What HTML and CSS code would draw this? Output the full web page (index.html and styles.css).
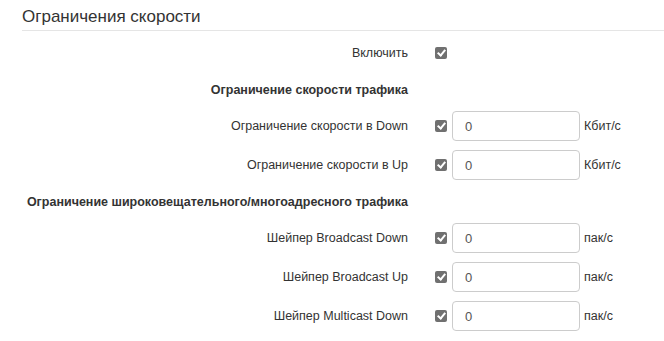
FILE: index.html
```html
<!DOCTYPE html>
<html>
  <head>
    <meta charset="utf-8">
    <link rel="stylesheet" href="styles.css">
    <title>Ограничения скорости</title>
  </head>
  <body>
    <div id="speed-limits">
      <h2 class="page-title">Ограничения скорости</h2>

      <div class="row row-first">
        <label for="enable" class="row-label">Включить</label>
        <input type="checkbox" id="enable" class="check" checked>
      </div>

      <div class="section">
        <div class="row-label section-label">Ограничение скорости трафика</div>
      </div>

      <div class="row row-after-section">
        <label for="rate-down" class="row-label">Ограничение скорости в Down</label>
        <input type="checkbox" class="check" checked>
        <input type="text" id="rate-down" class="value" value="0">
        <span class="unit">Кбит/с</span>
      </div>
      <div class="row">
        <label for="rate-up" class="row-label">Ограничение скорости в Up</label>
        <input type="checkbox" class="check" checked>
        <input type="text" id="rate-up" class="value" value="0">
        <span class="unit">Кбит/с</span>
      </div>

      <div class="section">
        <div class="row-label section-label">Ограничение широковещательного/многоадресного трафика</div>
      </div>

      <div class="row row-after-section">
        <label for="bc-down" class="row-label">Шейпер Broadcast Down</label>
        <input type="checkbox" class="check" checked>
        <input type="text" id="bc-down" class="value" value="0">
        <span class="unit">пак/с</span>
      </div>
      <div class="row">
        <label for="bc-up" class="row-label">Шейпер Broadcast Up</label>
        <input type="checkbox" class="check" checked>
        <input type="text" id="bc-up" class="value" value="0">
        <span class="unit">пак/с</span>
      </div>
      <div class="row">
        <label for="mc-down" class="row-label">Шейпер Multicast Down</label>
        <input type="checkbox" class="check" checked>
        <input type="text" id="mc-down" class="value" value="0">
        <span class="unit">пак/с</span>
      </div>
    </div>
  </body>
</html>
```

FILE: styles.css
```css
* {
  box-sizing: border-box;
}
body {
  margin: 0;
  font-family: "Liberation Sans", Arial, sans-serif;
  font-size: 12.5px;
  color: #333333;
  background-color: #fff;
}
#speed-limits {
  padding-left: 22px;
}
.page-title {
  height: 31px;
  margin: 0;
  padding-top: 6px;
  font-size: 17px;
  font-weight: 400;
  line-height: 22px;
  color: #333333;
  border-bottom: 1px solid #e5e5e5;
}
.row {
  display: flex;
  align-items: center;
  height: 30px;
  margin-top: 9px;
}
.row-first {
  margin-top: 7px;
}
.row-after-section {
  margin-top: 8px;
}
.section {
  display: flex;
  align-items: center;
  height: 26px;
  margin-top: 9px;
}
.row-label {
  width: 386px;
  flex-shrink: 0;
  text-align: right;
  white-space: nowrap;
}
.section-label {
  font-weight: 700;
}
.check {
  appearance: none;
  position: relative;
  width: 12px;
  height: 12px;
  margin: 0 0 0 27px;
  border-radius: 2px;
  background-color: #707070;
}
.check:checked::after {
  content: "";
  position: absolute;
  left: 4px;
  top: 1px;
  width: 3px;
  height: 6px;
  border-right: 2px solid #fff;
  border-bottom: 2px solid #fff;
  transform: rotate(40deg);
}
.value {
  width: 128px;
  height: 30px;
  margin-left: 5px;
  padding: 0 12px;
  font-family: inherit;
  font-size: 13px;
  color: #555555;
  border: 1px solid #cccccc;
  border-radius: 4px;
  outline: none;
}
.unit {
  margin-left: 4px;
}
```
